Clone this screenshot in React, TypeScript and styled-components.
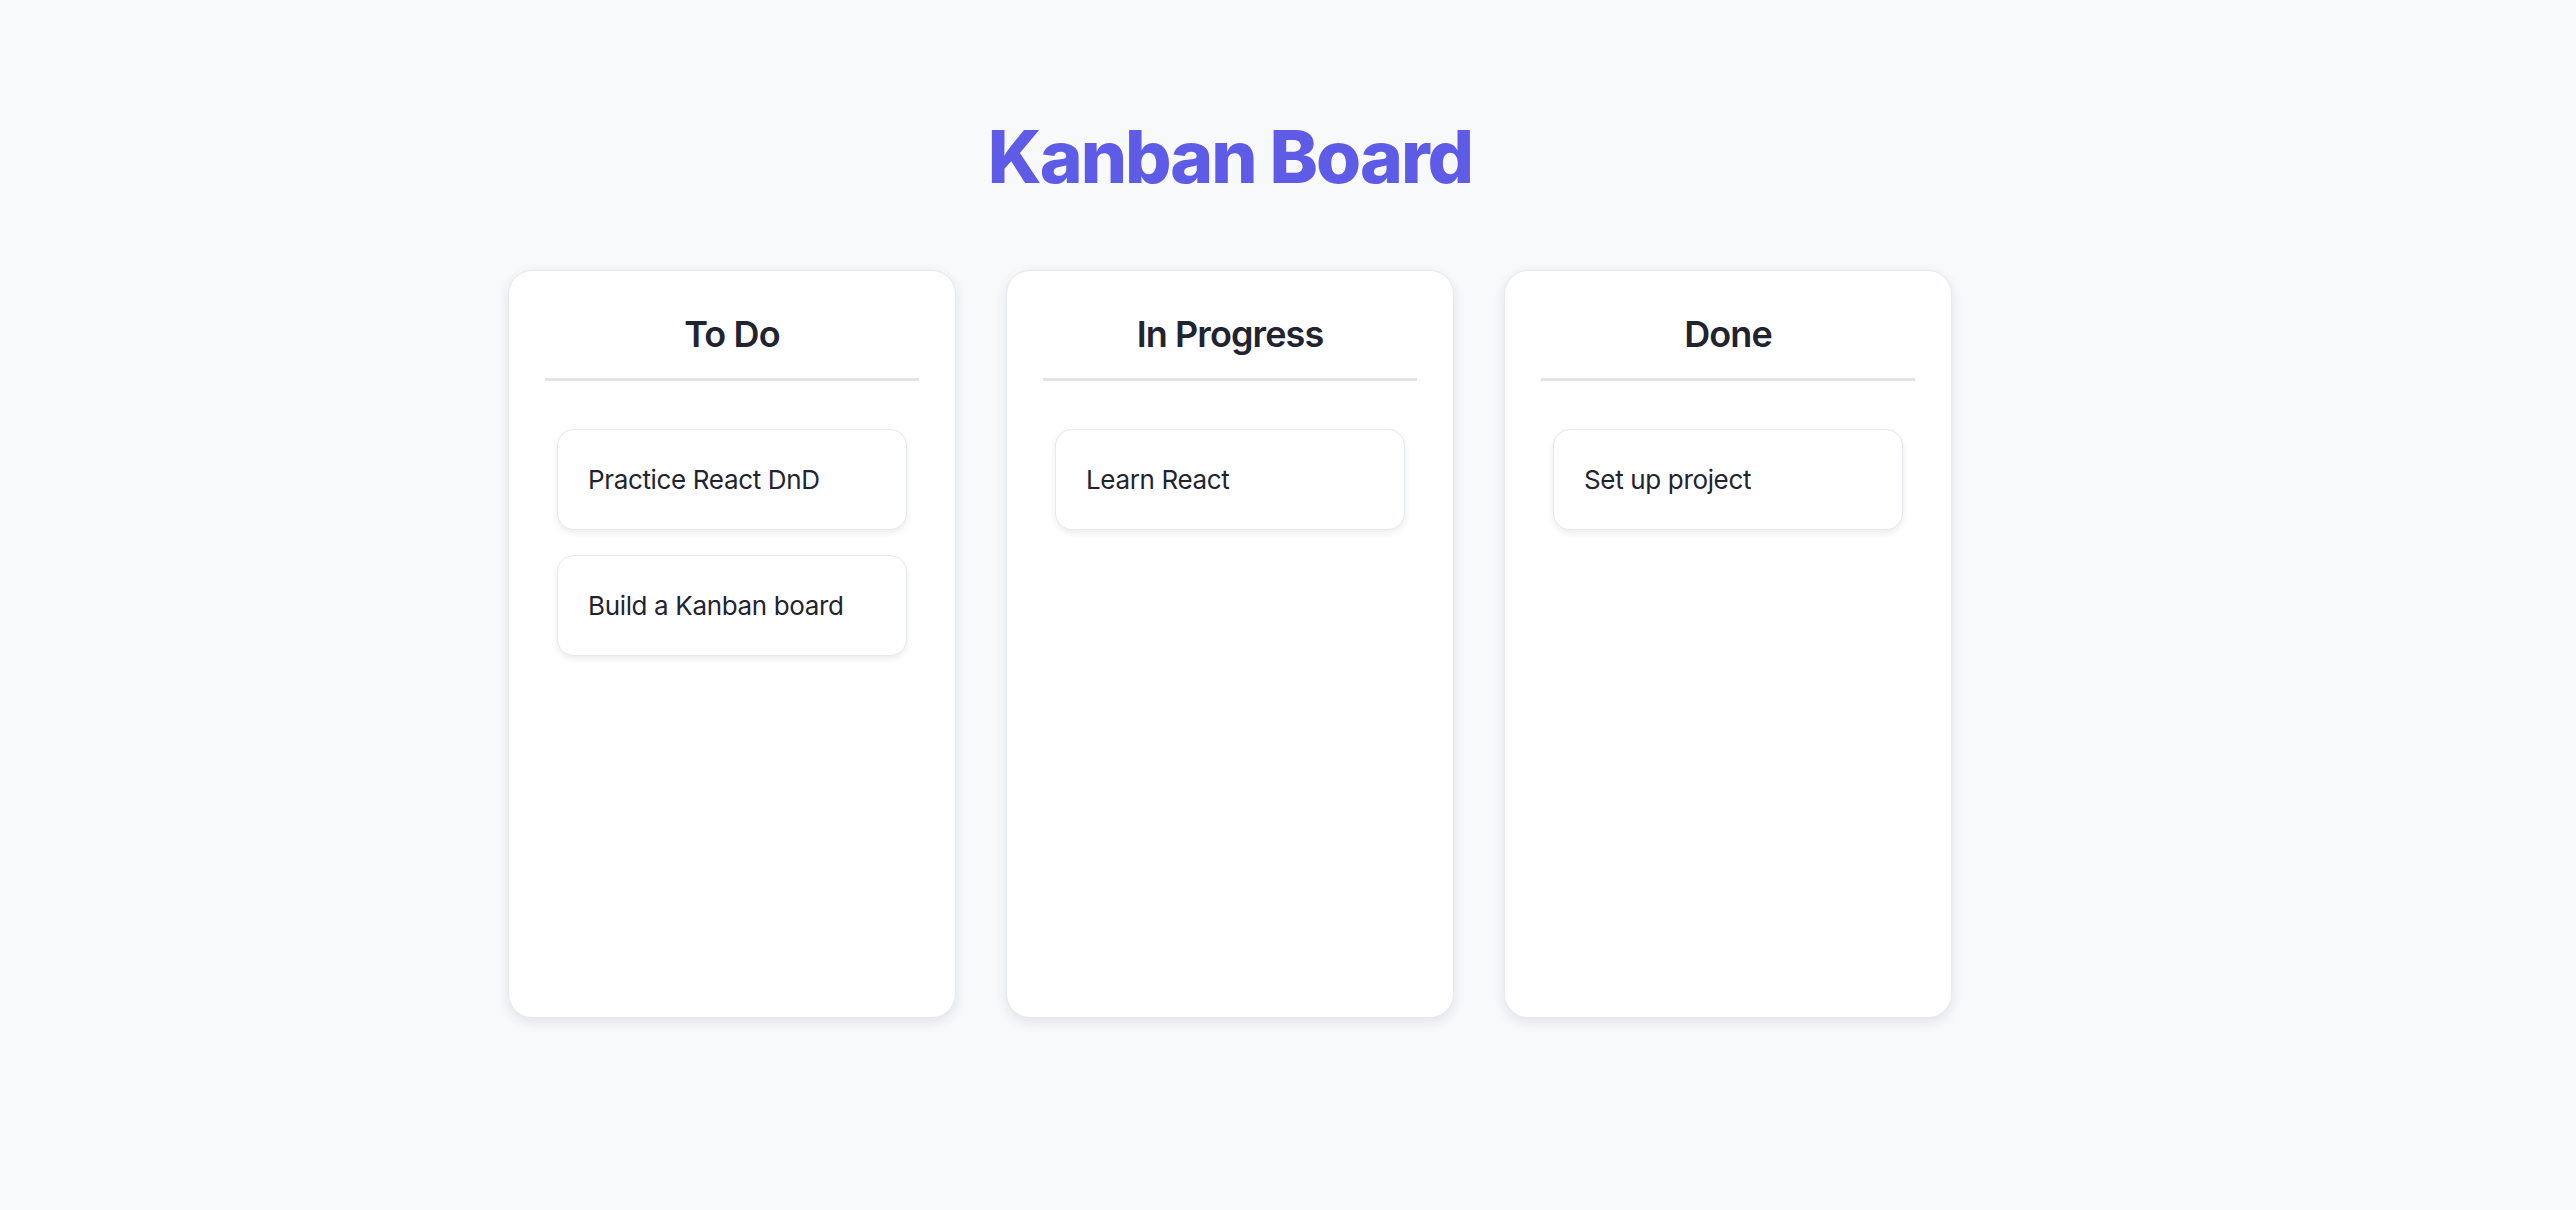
import React from 'react';
import styled, { createGlobalStyle } from 'styled-components';

const GlobalStyle = createGlobalStyle`
  * { box-sizing: border-box; }
  html, body {
    margin: 0;
    padding: 0;
    background-color: #f7f9fb;
    font-family: Inter, "Noto Sans", "Liberation Sans", sans-serif;
    color: #1f2430;
  }
`;

const Page = styled.div`
  min-height: 100vh;
  display: flex;
  flex-direction: column;
  align-items: center;
  padding: 113px 116px 0 0;
`;

const Title = styled.h1`
  margin: 0 0 69px 0;
  font-size: 73px;
  line-height: 88px;
  font-weight: 800;
  letter-spacing: -2px;
  color: #5e5ce6;
`;

const Board = styled.div`
  display: flex;
  gap: 50px;
`;

const Column = styled.div`
  width: 448px;
  height: 748px;
  padding: 36px;
  background-color: #ffffff;
  border: 1px solid #e6e9ee;
  border-radius: 24px;
  box-shadow: 0 4px 12px rgba(30, 45, 50, 0.1);
  display: flex;
  flex-direction: column;
`;

const ColumnTitle = styled.h2`
  margin: 0 0 36px 0;
  padding-bottom: 17px;
  border-bottom: 3px solid #e2e5e8;
  font-size: 36px;
  line-height: 54px;
  font-weight: 600;
  letter-spacing: -0.9px;
  text-align: center;
  color: #1f2430;
`;

const CardList = styled.div`
  padding: 12px;
  display: flex;
  flex-direction: column;
  gap: 25px;
`;

const Card = styled.div`
  padding: 30px;
  background-color: #ffffff;
  border: 1px solid #e6e9ee;
  border-radius: 17px;
  box-shadow: 0 3px 6px rgba(30, 45, 50, 0.09);
  font-size: 26px;
  line-height: 39px;
  letter-spacing: -0.35px;
  color: #1f2430;
`;

type ColumnData = { id: string; title: string; tasks: string[] };

const columns: ColumnData[] = [
  { id: 'todo', title: 'To Do', tasks: ['Practice React DnD', 'Build a Kanban board'] },
  { id: 'progress', title: 'In Progress', tasks: ['Learn React'] },
  { id: 'done', title: 'Done', tasks: ['Set up project'] },
];

export default function App() {
  return (
    <>
      <GlobalStyle />
      <Page>
        <Title>Kanban Board</Title>
        <Board>
          {columns.map((col) => (
            <Column key={col.id}>
              <ColumnTitle>{col.title}</ColumnTitle>
              <CardList>
                {col.tasks.map((task) => (
                  <Card key={task}>{task}</Card>
                ))}
              </CardList>
            </Column>
          ))}
        </Board>
      </Page>
    </>
  );
}
